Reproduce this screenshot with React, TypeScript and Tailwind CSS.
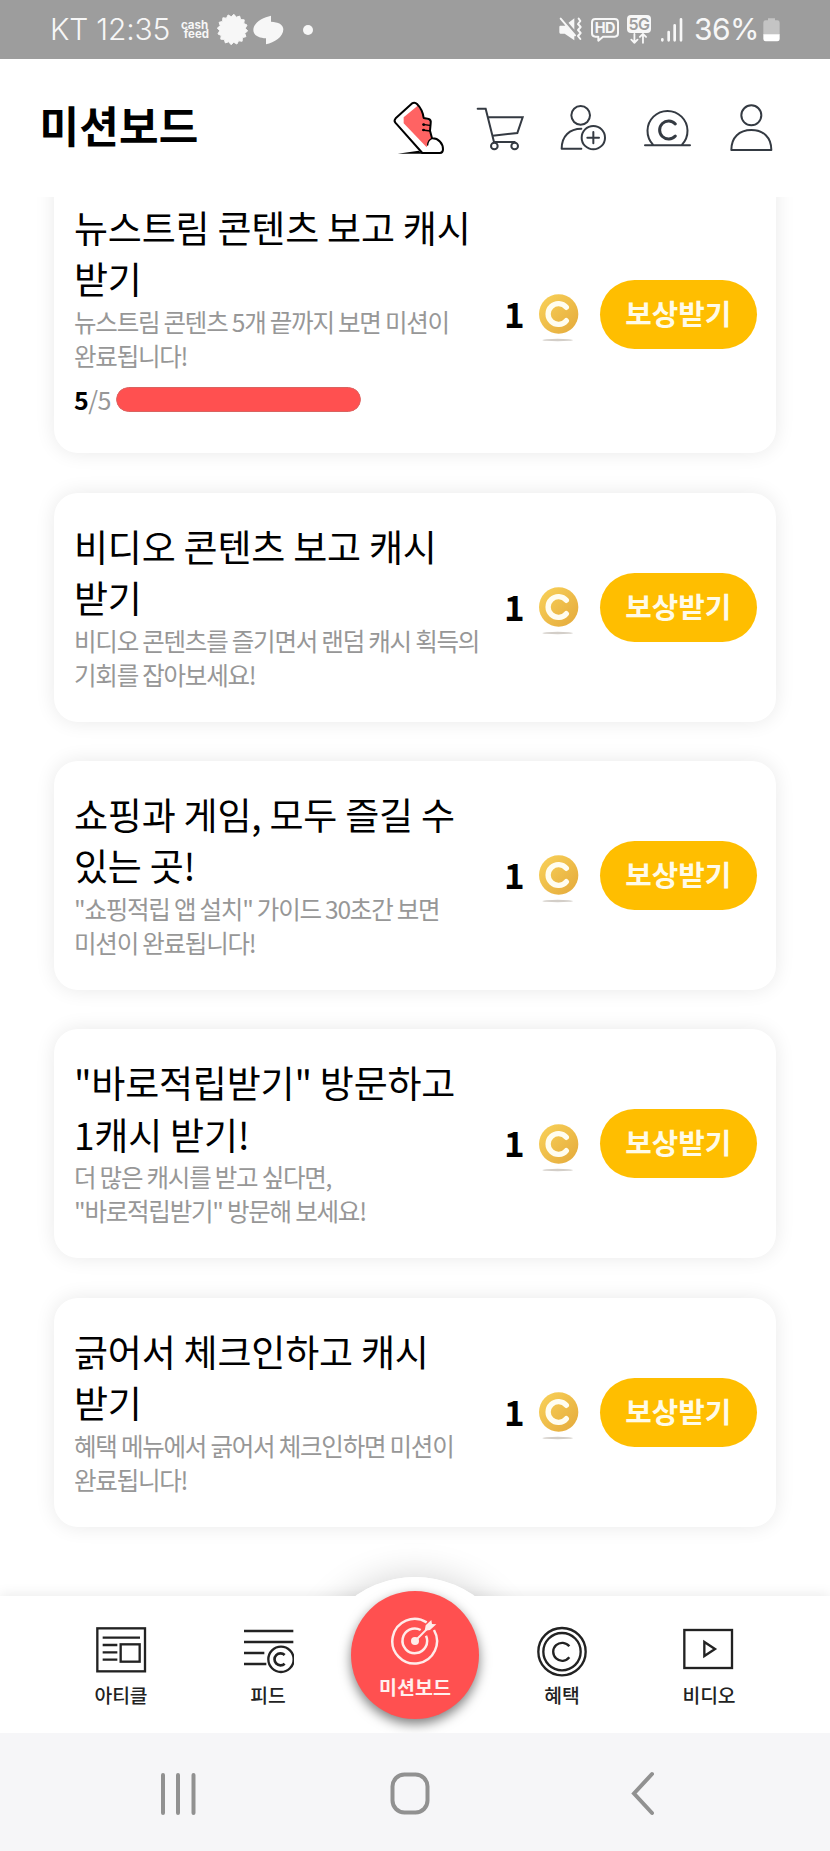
import type { ReactNode } from 'react';

interface Mission {
  title: string[];
  desc: string[];
  progress?: { done: number; total: number };
}

const missions: Mission[] = [
  {
    title: ['뉴스트림 콘텐츠 보고 캐시', '받기'],
    desc: ['뉴스트림 콘텐츠 5개 끝까지 보면 미션이', '완료됩니다!'],
    progress: { done: 5, total: 5 },
  },
  {
    title: ['비디오 콘텐츠 보고 캐시', '받기'],
    desc: ['비디오 콘텐츠를 즐기면서 랜덤 캐시 획득의', '기회를 잡아보세요!'],
  },
  {
    title: ['쇼핑과 게임, 모두 즐길 수', '있는 곳!'],
    desc: ['"쇼핑적립 앱 설치" 가이드 30초간 보면', '미션이 완료됩니다!'],
  },
  {
    title: ['"바로적립받기" 방문하고', '1캐시 받기!'],
    desc: ['더 많은 캐시를 받고 싶다면,', '"바로적립받기" 방문해 보세요!'],
  },
  {
    title: ['긁어서 체크인하고 캐시', '받기'],
    desc: ['혜택 메뉴에서 긁어서 체크인하면 미션이', '완료됩니다!'],
  },
];

// --- Status bar ---

const badgePoints = Array.from({ length: 32 }, (_, i) => {
  const r = i % 2 ? 12.8 : 15.2;
  const a = (i * Math.PI) / 16 + Math.PI / 32;
  return `${(15.5 + r * Math.cos(a)).toFixed(2)},${(15.5 + r * Math.sin(a)).toFixed(2)}`;
}).join(' ');

const StatusBar = () => (
  <div className="flex h-[59px] shrink-0 items-center bg-[#9d9d9d] pl-[50px] pr-[50px] text-[#f7f7f7]">
    <span className="whitespace-nowrap font-['Inter','Noto_Sans_CJK_KR',sans-serif] text-[30px] font-light tracking-[-0.2px]">KT 12:35</span>
    <div className="ml-[11px] w-[31px] whitespace-pre font-['Inter',sans-serif] text-[11.5px] font-bold leading-[8.5px]">
      {'cash\n feed'}
    </div>
    <svg className="ml-[5px]" width="31" height="31" viewBox="0 0 31 31" fill="#f7f7f7">
      <polygon points={badgePoints} stroke="#f7f7f7" strokeLinejoin="round" />
    </svg>
    <svg className="ml-[5px]" width="31" height="30" viewBox="0 0 93 90" fill="#f7f7f7">
      <path d="M54 2C31 7 1 22 1 45C1 61 17 69 39 70L39 88C64 83 91 66 91 43C91 28 76 21 54 20Z" />
    </svg>
    <span className="ml-[19px] h-[10px] w-[10px] rounded-full bg-[#f7f7f7]" />

    <div className="ml-auto flex items-center">
      {/* mute / vibrate */}
      <svg width="24" height="25" viewBox="0 0 72 75" fill="#f7f7f7">
        <path d="M4 26H17L46 4V70L17 50H4Q1 50 1 46V30Q1 26 4 26Z" />
        <path d="M7 1L50 51" stroke="#9d9d9d" strokeWidth="11" />
        <path d="M5 5L48 55" stroke="#f7f7f7" strokeWidth="6" strokeLinecap="round" />
        <path d="M59 5L64 12L57 21L65 30L57 39L65 48L57 57L64 66" fill="none" stroke="#f7f7f7" strokeWidth="6" strokeLinecap="round" strokeLinejoin="round" />
      </svg>
      {/* HD voice */}
      <div className="relative ml-[8px] h-[24px] w-[28px]">
        <svg className="absolute inset-0" width="28" height="24" viewBox="0 0 84 72" fill="none" stroke="#f7f7f7" strokeWidth="6">
          <path d="M13 3H71Q81 3 81 13V46Q81 56 71 56H36L22 68V56H13Q3 56 3 46V13Q3 3 13 3Z" strokeLinejoin="round" />
        </svg>
        <span className="absolute inset-x-0 top-[2px] text-center font-['Inter',sans-serif] text-[14.5px] font-bold leading-[16px] tracking-[-0.4px]">HD</span>
      </div>
      {/* 5G */}
      <div className="ml-[8px] flex h-[29px] w-[24px] flex-col">
        <span className="h-[18px] rounded-[4px] bg-[#f7f7f7] text-center font-['Inter',sans-serif] text-[16px] font-semibold leading-[18px] tracking-[-0.5px] text-[#9d9d9d]">5G</span>
        <svg width="24" height="12" viewBox="0 0 72 36" fill="none" stroke="#f7f7f7" strokeWidth="6" strokeLinecap="round" strokeLinejoin="round">
          <path d="M21 3V32M11 22L21 32L31 22M49 32V3M39 13L49 3L59 13" />
        </svg>
      </div>
      <svg className="ml-[10px]" width="22" height="24" viewBox="0 0 66 72" fill="none" stroke="#f7f7f7" strokeWidth="8" strokeLinecap="round">
        <path d="M4 64V67M23 42V67M41 22V67M60 4V67" />
      </svg>
      <span className="ml-[11px] font-['Inter',sans-serif] text-[30px] font-normal tracking-[-0.5px]">36%</span>
      <svg className="ml-[4px]" width="17" height="24" viewBox="0 0 51 72">
        <path d="M15 1H36V7H43Q50 7 50 14V50H1V14Q1 7 8 7H15Z" fill="#c4c4c4" />
        <path d="M1 49H50V63Q50 70 43 70H8Q1 70 1 63Z" fill="#ffffff" />
      </svg>
    </div>
  </div>
);

// --- Header ---

const HeaderIcon = ({ x, children }: { x: number; children: ReactNode }) => (
  <svg width="60" height="60" viewBox={`${x} 54 180 180`} fill="none" stroke="#343a42" strokeWidth="6" strokeLinecap="round" strokeLinejoin="round">
    {children}
  </svg>
);

const Header = () => (
  <header className="z-10 flex h-[138px] shrink-0 items-center justify-between bg-white pl-[39.5px] pr-[49px]">
    <h1 className="pb-[7px] text-[43px] font-bold leading-none tracking-[0.2px] text-black">미션보드</h1>
    <div className="flex gap-[23.33px]">
      <HeaderIcon x={23}>
        <path d="M52 221L115 212L128 221Z" fill="#000" stroke="none" />
        <path d="M70 112L112 77L126 98L130 115L148 122L151 155L154 177L143 187L139 202L70 130Z" fill="#ff6363" stroke="none" />
        <path d="M126 219L45 128Q40 122 46 115L94 71Q103 65 110 72C122 84 128 98 130 114L145 117Q153 120 151 130L149 152L155 175C174 174 188 190 188 208Q188 219 179 219Z" stroke="#000" />
        <path d="M155 175Q143 180 142 195M128 133L148 136M127 150L149 153" stroke="#000" strokeWidth="4" />
        <circle cx="130" cy="134" r="4" fill="#000" stroke="none" />
        <circle cx="130" cy="150" r="4" fill="#000" stroke="none" />
      </HeaderIcon>
      <HeaderIcon x={272}>
        <path d="M292 86H316L341 186H403M324 112H427L411 159L337 167" strokeLinejoin="miter" />
        <circle cx="342" cy="198" r="10" />
        <circle cx="403" cy="198" r="10" />
      </HeaderIcon>
      <HeaderIcon x={523}>
        <circle cx="603" cy="106" r="28" />
        <path d="M605 146C570 146 546 168 546 206H605" />
        <circle cx="641" cy="173" r="35" />
        <path d="M623 173H658M641 156V190" />
      </HeaderIcon>
      <HeaderIcon x={774}>
        <path d="M819 194A60 60 0 1 1 906 194M795 196H930" />
        <path d="M886 132A27 27 0 1 0 886 168" strokeWidth="9" />
      </HeaderIcon>
      <HeaderIcon x={1023}>
        <circle cx="1114" cy="106" r="30" />
        <path d="M1054 210C1054 172 1078 150 1114 150S1174 172 1174 210Z" />
      </HeaderIcon>
    </div>
  </header>
);

// --- Mission list ---

const Coin = () => (
  <svg width="42" height="50" viewBox="0 0 126 150">
    <defs>
      <linearGradient id="coin" x1="0" y1="0" x2="1" y2="1">
        <stop offset="0" stopColor="#f9d259" />
        <stop offset="1" stopColor="#e4a93b" />
      </linearGradient>
    </defs>
    <circle cx="62" cy="60" r="59" fill="url(#coin)" />
    <path d="M85 40A31 31 0 1 0 85 80" fill="none" stroke="#fffdf0" strokeWidth="16" strokeLinecap="round" />
    <ellipse cx="59" cy="138" rx="46" ry="3.5" fill="#d3cec8" />
  </svg>
);

const MissionCard = ({ title, desc, progress }: Mission) => (
  <section
    className={`flex w-[722px] shrink-0 items-center rounded-[24px] bg-white pl-[20px] pr-[20.5px] shadow-[0_0_20px_rgba(0,0,0,0.09)] ${progress ? 'h-[289px] pt-[4px]' : 'h-[229px]'}`}
  >
    <div className="w-[430px] shrink-0 whitespace-nowrap">
      <h2 className="-mt-[2px] text-[37px] leading-[51.5px] tracking-[-0.2px] text-black">
        {title.map((line) => <div key={line}>{line}</div>)}
      </h2>
      <p className="text-[24.5px] leading-[34px] tracking-[-1.22px] text-[#979797]">
        {desc.map((line) => <span key={line} className="block">{line}</span>)}
      </p>
      {progress && (
        <div className="mt-[9px] flex h-[36px] items-center text-[25px] tracking-[-0.5px] text-[#979797]">
          <span className="w-[42px]">
            <b className="text-black">{progress.done}</b>/{progress.total}
          </span>
          <div className="h-[25px] w-[245px] overflow-hidden rounded-full">
            <div
              className="h-full rounded-full border border-[#d96360] bg-[#ff5050]"
              style={{ width: `${(progress.done / progress.total) * 100}%` }}
            />
          </div>
        </div>
      )}
    </div>
    <div className={`flex flex-1 items-center justify-end ${progress ? 'pt-[7px]' : ''}`}>
      <span className="pb-[4px] text-[35px] font-bold leading-none text-black">1</span>
      <div className="ml-[13px] mr-[20px] pt-[10px]">
        <Coin />
      </div>
      <button className="h-[69px] w-[157px] rounded-full bg-[#ffbe00] pb-[2px] text-[28.8px] font-bold leading-none text-[#fffbe8]">보상받기</button>
    </div>
  </section>
);

// --- Bottom navigation ---

const NavItem = ({ label, children }: { label: string; children: ReactNode }) => (
  <div className="flex w-[147px] flex-col items-center pt-[29px] text-[19.3px] font-medium leading-[28px] text-[#222]">
    <svg width="52" height="52" viewBox="0 0 156 156" fill="none" stroke="#222" strokeWidth="7">
      {children}
    </svg>
    <span className="mt-[4px]">{label}</span>
  </div>
);

const BottomNav = () => (
  <nav className="relative z-10 h-[137px] shrink-0">
    <div className="absolute left-[312px] top-[-19px] h-[206px] w-[206px] rounded-full bg-white shadow-[0_0_36px_rgba(0,0,0,0.18)]" />
    <div className="relative flex h-full justify-center bg-white shadow-[0_-2px_12px_rgba(0,0,0,0.08)]">
      <div className="absolute left-1/2 top-[-19px] h-[60px] w-[206px] -translate-x-1/2 overflow-hidden">
        <div className="h-[206px] w-[206px] rounded-full bg-white" />
      </div>
      <NavItem label="아티클">
        <rect x="7" y="10" width="143" height="129" />
        <path d="M23 38H135M23 60H67M23 82H67M23 104H67" />
        <rect x="77" y="58" width="57" height="52" />
      </NavItem>
      <NavItem label="피드">
        <path d="M6 18H154M6 51H154M6 84H67M6 117H73" />
        <circle cx="117" cy="103" r="38" />
        <path d="M128 90A18 18 0 1 0 128 116" strokeWidth="8" />
      </NavItem>
      <div className="relative w-[147px] shrink-0">
        <div className="absolute left-[9.5px] top-[-5px] flex h-[128px] w-[128px] flex-col items-center rounded-full bg-[#ff5050] pt-[25px] text-[#fff0ee] shadow-[0_5px_12px_rgba(0,0,0,0.5)]">
          <svg width="50" height="50" viewBox="0 0 150 150" fill="none" stroke="#ffecea" strokeWidth="7.5">
            <path d="M110 19A67 67 0 1 0 132 42" />
            <path d="M92 42A37 37 0 1 0 108 59" />
            <circle cx="75" cy="75" r="12" fill="#ffecea" stroke="none" />
            <path d="M75 75L116 34" strokeWidth="6" />
            <path d="M104 44L107 28L124 12L126 24L139 25L120 42Z" fill="#ffecea" stroke="none" />
          </svg>
          <span className="text-[19.5px] font-bold leading-[41px]">미션보드</span>
        </div>
      </div>
      <NavItem label="혜택">
        <circle cx="78" cy="80" r="71" />
        <circle cx="78" cy="80" r="56" />
        <path d="M100 64A27 27 0 1 0 100 97" />
      </NavItem>
      <NavItem label="비디오">
        <rect x="3" y="15" width="143" height="114" className="translate-x-[1px]" />
        <path d="M64 51V93L96 72Z" />
      </NavItem>
    </div>
  </nav>
);

const SystemBar = () => (
  <div className="z-20 flex flex-1 items-center justify-between bg-[#f6f6f8] pl-[158px] pr-[174px] pt-[3px]">
    <svg width="40" height="46" viewBox="0 0 40 46" stroke="#919191" strokeWidth="4" strokeLinecap="round">
      <path d="M5 4V42M20 4V42M35.5 4V42" />
    </svg>
    <svg className="-ml-[9px]" width="42" height="46" viewBox="0 0 42 46" fill="none" stroke="#919191" strokeWidth="4">
      <rect x="3.5" y="3.5" width="35" height="38" rx="12" />
    </svg>
    <svg width="26" height="46" viewBox="0 0 26 46" fill="none" stroke="#919191" strokeWidth="4" strokeLinecap="round">
      <path d="M22 3L4 22.5L22 42" />
    </svg>
  </div>
);

export default function App() {
  return (
    <div className="flex h-[1851px] w-[830px] flex-col overflow-hidden bg-white font-['Noto_Sans_CJK_KR',sans-serif]">
      <StatusBar />
      <Header />
      <main className="flex h-[1399px] shrink-0 flex-col items-center justify-end gap-[39.3px] overflow-hidden pb-[69.5px]">
        {missions.map((mission) => (
          <MissionCard key={mission.title[0]} {...mission} />
        ))}
      </main>
      <BottomNav />
      <SystemBar />
    </div>
  );
}
